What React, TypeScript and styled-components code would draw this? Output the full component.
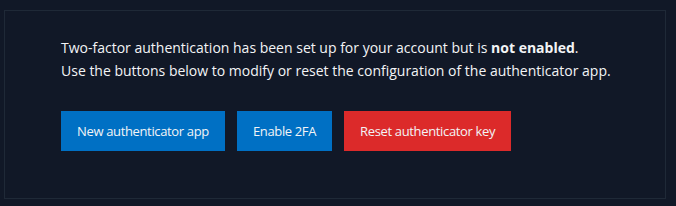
import React from 'react';
import styled, { createGlobalStyle } from 'styled-components';

const GlobalStyle = createGlobalStyle`
  html, body {
    margin: 0;
    padding: 0;
    background: #111827;
  }
  body {
    font-family: "Open Sans", "Noto Sans", sans-serif;
    color: #e5e7eb;
  }
`;

const Page = styled.div`
  width: 676px;
  height: 206px;
  padding: 10px 10px 7px 4px;
  box-sizing: border-box;
`;

const Panel = styled.section`
  height: 100%;
  box-sizing: border-box;
  border: 1px solid #1f2937;
  padding: 25px 20px 0 56px;
`;

const Message = styled.p`
  margin: 0 0 29px;
  font-size: 14px;
  line-height: 23px;
  color: #f3f4f6;

  strong {
    font-weight: 700;
  }
`;

const Actions = styled.div`
  display: flex;
  gap: 12px;
`;

const Button = styled.button<{ $variant?: 'primary' | 'danger' }>`
  height: 40px;
  padding: 0 16px;
  border: none;
  border-radius: 0;
  font-family: inherit;
  font-size: 13px;
  letter-spacing: -0.35px;
  color: #f3f4f6;
  background: ${p => (p.$variant === 'danger' ? '#dc2a2a' : '#0070c4')};
  cursor: pointer;
`;

export default function App() {
  return (
    <>
      <GlobalStyle />
      <Page>
        <Panel>
          <Message>
            Two-factor authentication has been set up for your account but is <strong>not enabled</strong>.
            <br />
            Use the buttons below to modify or reset the configuration of the authenticator app.
          </Message>
          <Actions>
            <Button>New authenticator app</Button>
            <Button>Enable 2FA</Button>
            <Button $variant="danger">Reset authenticator key</Button>
          </Actions>
        </Panel>
      </Page>
    </>
  );
}
